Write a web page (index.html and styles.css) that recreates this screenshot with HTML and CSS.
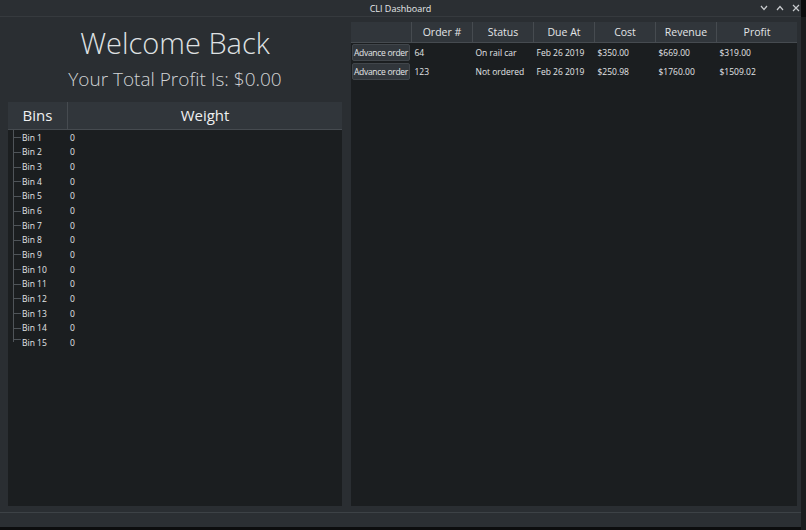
FILE: index.html
```html
<!DOCTYPE html>
<html lang="en">
<head>
    <meta charset="UTF-8">
    <title>CLI Dashboard</title>
    <link rel="stylesheet" href="styles.css">
</head>
<body>
    <div class="window">
        <div class="titlebar">
            <span class="title">CLI Dashboard</span>
            <div class="controls">
                <svg width="8" height="6" viewBox="0 0 8 6"><path d="M1 1 L4 4.5 L7 1" fill="none" stroke="#c8cbce" stroke-width="1.2"/></svg>
                <svg width="8" height="6" viewBox="0 0 8 6"><path d="M1 5 L4 1.5 L7 5" fill="none" stroke="#c8cbce" stroke-width="1.2"/></svg>
                <svg width="8" height="8" viewBox="0 0 8 8"><path d="M1 1 L7 7 M7 1 L1 7" fill="none" stroke="#c8cbce" stroke-width="1.2"/></svg>
            </div>
        </div>

        <div class="main">
            <div class="left">
                <div class="welcome">
                    <h1>Welcome Back</h1>
                    <h2>Your Total Profit Is: $0.00</h2>
                </div>
                <div class="bins">
                    <div class="bins-head">
                        <div class="col-bin">Bins</div>
                        <div class="col-weight">Weight</div>
                    </div>
                    <div class="bins-body" id="bins"></div>
                </div>
            </div>

            <div class="right">
                <table class="orders">
                    <thead>
                        <tr>
                            <th class="c-btn"></th>
                            <th>Order #</th>
                            <th>Status</th>
                            <th>Due At</th>
                            <th>Cost</th>
                            <th>Revenue</th>
                            <th class="c-last">Profit</th>
                        </tr>
                    </thead>
                    <tbody>
                        <tr>
                            <td class="c-btn"><button class="btn">Advance order</button></td>
                            <td>64</td>
                            <td>On rail car</td>
                            <td>Feb 26 2019</td>
                            <td>$350.00</td>
                            <td>$669.00</td>
                            <td>$319.00</td>
                        </tr>
                        <tr>
                            <td class="c-btn"><button class="btn">Advance order</button></td>
                            <td>123</td>
                            <td>Not ordered</td>
                            <td>Feb 26 2019</td>
                            <td>$250.98</td>
                            <td>$1760.00</td>
                            <td>$1509.02</td>
                        </tr>
                    </tbody>
                </table>
            </div>
        </div>

        <div class="statusbar"></div>
    </div>
    <div class="terminal"></div>

    <script>
        // fill the bin tree
        var bins = document.getElementById('bins');
        for (var i = 1; i <= 15; i++) {
            var row = document.createElement('div');
            row.className = 'bin-row' + (i === 15 ? ' last' : '');
            row.innerHTML = '<div class="col-bin"><span class="branch"></span>Bin ' + i + '</div><div class="col-weight">0</div>';
            bins.appendChild(row);
        }
    </script>
</body>
</html>
```

FILE: styles.css
```css
html, body {
    margin: 0;
    padding: 0;
}
body {
    width: 806px;
    height: 530px;
    overflow: hidden;
    background-color: #0c0d0e;
    font-family: "Open Sans", "Noto Sans", sans-serif;
    color: #eff0f1;
    position: relative;
}
.window {
    width: 801px;
    height: 527px;
    background-color: #2a2e32;
    display: flex;
    flex-direction: column;
}
.titlebar {
    height: 16px;
    border-bottom: 1px solid #363a3e;
    background-color: #2b2f33;
    display: flex;
    align-items: center;
    justify-content: center;
    position: relative;
}
.title {
    font-size: 9px;
    color: #e6e8ea;
}
.controls {
    position: absolute;
    right: 1px;
    top: 4px;
    display: flex;
    gap: 8px;
    align-items: center;
}
.main {
    flex: 1;
    display: flex;
    padding: 0 4px 0 8px;
    gap: 9px;
}
.left {
    width: 334px;
    display: flex;
    flex-direction: column;
}
.welcome {
    height: 85px;
    text-align: center;
}
.welcome h1 {
    margin: 8px 0 0 0;
    font-size: 29px;
    font-weight: 300;
    line-height: 36px;
    color: #dfe1e3;
}
.welcome h2 {
    margin: 4px 0 0 0;
    font-size: 19px;
    font-weight: 300;
    line-height: 28px;
    color: #d2d4d6;
}
.bins {
    flex: 1;
    background-color: #1b1e20;
    margin-bottom: 6px;
}
.bins-head {
    height: 27px;
    display: flex;
    background-color: #31363b;
    border-bottom: 1px solid #464b50;
    font-size: 15px;
    line-height: 27px;
}
.bins-head .col-bin {
    width: 59px;
    text-align: center;
    border-right: 1px solid #464b50;
}
.bins-head .col-weight {
    flex: 1;
    text-align: center;
}
.bin-row {
    height: 14.65px;
    display: flex;
    align-items: center;
    font-size: 8.5px;
    color: #e3e5e7;
}
.bin-row .col-bin {
    width: 62px;
    padding-left: 14px;
    box-sizing: border-box;
    position: relative;
    height: 100%;
    display: flex;
    align-items: center;
}
.bin-row .col-weight {
    flex: 1;
}
.branch {
    position: absolute;
    left: 5px;
    top: 0;
    height: 100%;
    width: 7px;
    border-left: 1px solid #4f5459;
}
.branch::after {
    content: "";
    position: absolute;
    left: 0;
    top: 50%;
    width: 7px;
    border-top: 1px solid #4f5459;
}
.bin-row.last .branch {
    height: 50%;
}
.right {
    flex: 1;
    margin-top: 5px;
    margin-bottom: 6px;
    background-color: #1b1e20;
}
.orders {
    width: 446px;
    border-collapse: collapse;
    table-layout: fixed;
}
.orders th {
    height: 20px;
    padding: 0;
    background-color: #31363b;
    border-right: 1px solid #464b50;
    border-bottom: 1px solid #464b50;
    font-size: 10.5px;
    font-weight: 400;
    color: #e3e5e7;
    text-align: center;
}
.orders th.c-btn {
    width: 60px;
}
.orders th.c-last {
    width: 80px;
    border-right: none;
}
.orders tbody tr {
    height: 19px;
}
.orders td {
    padding: 0 0 0 3px;
    font-size: 8.5px;
    line-height: 17px;
    color: #e3e5e7;
    white-space: nowrap;
    vertical-align: middle;
}
.orders td.c-btn {
    padding: 0 1px;
}
.btn {
    display: block;
    width: 58px;
    height: 17px;
    padding: 0;
    background-color: #31363b;
    border: 1px solid #41464b;
    border-radius: 2px;
    font-family: "Open Sans", "Noto Sans", sans-serif;
    font-size: 8.5px;
    letter-spacing: -0.3px;
    line-height: 15px;
    color: #e3e5e7;
    white-space: nowrap;
    overflow: hidden;
}
.statusbar {
    height: 14px;
    border-top: 1px solid #3d4246;
    background-color: #2b2f33;
}
.terminal {
    position: absolute;
    right: 0;
    top: 17px;
    width: 5px;
    height: 513px;
    background-color: #1a1c1e;
}
```
